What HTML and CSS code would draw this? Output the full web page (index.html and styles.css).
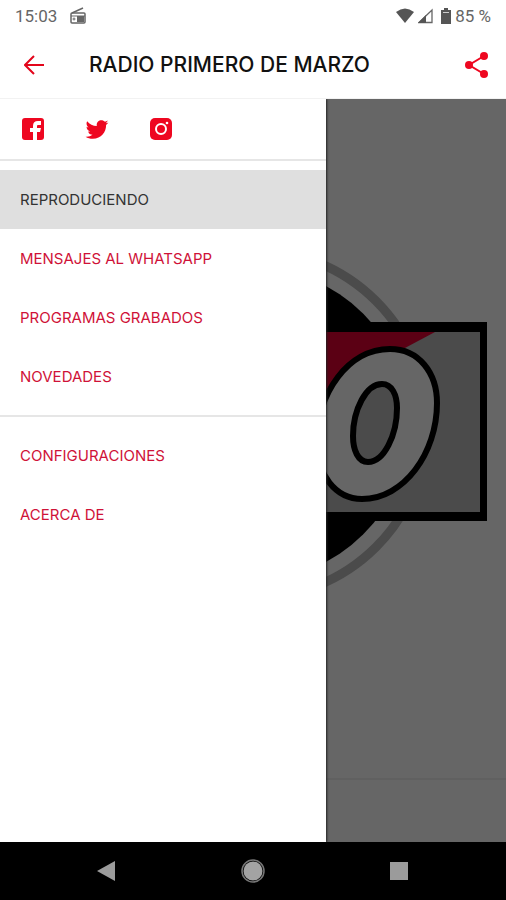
FILE: index.html
```html
<!DOCTYPE html>
<html lang="es">
<head>
<meta charset="utf-8">
<meta name="viewport" content="width=device-width, initial-scale=1">
<title>Radio Primero de Marzo</title>
<link rel="stylesheet" href="styles.css">
</head>
<body>
<div class="status">
  <span>15:03</span>
  <svg class="status-radio" width="18" height="18" viewBox="0 0 18 18" fill="none" stroke="#666" stroke-width="1.500"><path d="M3 6 14 1"/><rect x="2" y="6" width="14" height="10" rx="1"/><path d="M2 9h14" stroke-width="1"/><path d="M8 9h7v6H8z" fill="#666" stroke="none"/><circle cx="5" cy="12" r="1" stroke-width="1"/></svg>
  <div class="status-right">
    <svg width="18" height="16" viewBox="0 0 18 16" fill="#555"><path d="M0 4Q9-3 18 4L9 15z"/></svg>
    <svg width="16" height="16" viewBox="0 0 16 16"><path d="M1 14.500 14 2v12.500z" fill="none" stroke="#666" stroke-width="1.300"/><path d="M0 15 8 7v8z" fill="#555"/></svg>
    <svg class="battery" width="10" height="16" viewBox="0 0 10 16" fill="#555"><path d="M3 0h4v2h3v14H0V2h3z"/><path d="M2 4h6v1H2z" fill="#ccc"/></svg>
    <span>85 %</span>
  </div>
</div>
<header class="appbar">
  <button class="icon-button" aria-label="Volver"><svg width="22" height="22" viewBox="0 0 22 22" fill="none" stroke="#e3051b" stroke-width="2"><path d="M20 11H2M10 2l-9 9 9 9"/></svg></button>
  <h1>RADIO PRIMERO DE MARZO</h1>
  <button class="icon-button" aria-label="Compartir"><svg width="24" height="26" viewBox="0 0 24 26" fill="#ee0720"><path d="M19 4 4 13l15 9" fill="none" stroke="#ee0720" stroke-width="2"/><circle cx="19" cy="4" r="4"/><circle cx="4" cy="13" r="4"/><circle cx="19" cy="22" r="4"/></svg></button>
</header>
<div class="stage">
  <main class="player">
    <div class="cover">
      <svg width="468" height="360" viewBox="19 244 468 360">
        <circle cx="253" cy="424" r="174" fill="none" stroke="#4b4b4b" stroke-width="9"/>
        <circle cx="253" cy="424" r="156"/>
        <path d="M19 322h468v199H19z"/>
        <path d="M26 332h454v180H26z" fill="#4b4b4b"/>
        <path d="M26 332h409L326 390H26z" fill="#5b0014"/>
        <path d="M326 386 365 332 405 348 326 430z" fill="#5b0014"/>
        <path d="M390 349C419 349 437 373 437 403C437 453 404 499 362 499C335 499 317 474 317 443C317 393 348 349 390 349z" fill="#666" stroke="#000" stroke-width="6"/>
        <path d="M382 384C392 384 397 395 397 408C397 435 384 462 368 462C358 462 353 450 353 436C353 410 366 384 382 384z" fill="#4b4b4b" stroke="#000" stroke-width="6"/>
      </svg>
    </div>
    <div class="controls"></div>
  </main>
  <aside class="drawer">
    <div class="social">
      <a href="#" aria-label="Facebook"><svg width="22" height="22" viewBox="0 0 22 22"><rect width="22" height="22" rx="3" fill="#ee0720"/><path d="M11 22v-8H8v-4h3V8q0-5 5-5h3v4h-3q-1 0-1 1v2h4l-1 4h-3v8z" fill="#fff"/></svg></a>
      <a href="#" aria-label="Twitter"><svg width="24" height="24" viewBox="1 1 22 22" fill="#ee0720"><path d="M22.460 6c-.77.350-1.600.580-2.460.690.880-.530 1.560-1.370 1.880-2.380-.830.500-1.750.850-2.720 1.050C18.370 4.500 17.260 4 16 4c-2.350 0-4.270 1.920-4.270 4.290 0 .340.040.670.110.980C8.280 9.090 5.110 7.380 3 4.790c-.370.630-.580 1.370-.580 2.150 0 1.490.750 2.810 1.910 3.560-.710 0-1.370-.200-1.950-.500v.030c0 2.080 1.480 3.820 3.440 4.210a4.220 4.220 0 0 1-1.930.070 4.280 4.280 0 0 0 4 2.980 8.521 8.521 0 0 1-5.330 1.840c-.340 0-.680-.020-1.020-.060C3.440 20.290 5.700 21 8.120 21 16 21 20.330 14.460 20.330 8.790c0-.190 0-.370-.010-.560.840-.600 1.560-1.360 2.140-2.230z"/></svg></a>
      <a href="#" aria-label="Instagram"><svg width="22" height="22" viewBox="0 0 22 22"><rect width="22" height="22" rx="5" fill="#ee0720"/><circle cx="11" cy="11" r="5" fill="none" stroke="#fff" stroke-width="2"/><circle cx="17" cy="5" r="1.300" fill="#fff"/></svg></a>
    </div>
    <nav>
      <ul class="group">
        <li><a class="current" href="#" aria-current="page">REPRODUCIENDO</a></li>
        <li><a href="#">MENSAJES AL WHATSAPP</a></li>
        <li><a href="#">PROGRAMAS GRABADOS</a></li>
        <li><a href="#">NOVEDADES</a></li>
      </ul>
      <ul class="group">
        <li><a href="#">CONFIGURACIONES</a></li>
        <li><a href="#">ACERCA DE</a></li>
      </ul>
    </nav>
  </aside>
</div>
<footer class="system">
  <button aria-label="Atrás"><svg width="24" height="24" viewBox="0 0 24 24" fill="#9b9b9b"><path d="M2 12 20 2v20z"/></svg></button>
  <button aria-label="Inicio"><svg width="24" height="24" viewBox="0 0 24 24"><circle cx="12" cy="12" r="11" fill="none" stroke="#777" stroke-width="1.500"/><circle cx="12" cy="12" r="9.500" fill="#a3a3a3"/></svg></button>
  <button aria-label="Recientes"><svg width="24" height="24" viewBox="0 0 24 24"><rect x="3" y="3" width="18" height="18" fill="#9b9b9b"/></svg></button>
</footer>
</body>
</html>
```
FILE: styles.css
```css
* {
  box-sizing: border-box;
}

body {
  margin: 0;
  min-height: 100vh;
  display: flex;
  flex-direction: column;
  background: #fff;
  font-family: Inter, "Liberation Sans", sans-serif;
}

svg {
  display: block;
}

button {
  display: block;
  padding: 0;
  border: 0;
  background: none;
}

.status {
  display: flex;
  align-items: center;
  height: 31px;
  padding: 0 15px;
  color: #666;
  font-family: Roboto, sans-serif;
  font-size: 17px;
}

.status-radio {
  margin-left: 12px;
}

.status-right {
  display: flex;
  align-items: center;
  gap: 4px;
  margin-left: auto;
}

.battery {
  margin-left: 3px;
}

.appbar {
  display: flex;
  align-items: center;
  height: 68px;
  padding: 0 17px 0 24px;
  border-bottom: 1px solid #f2f2f2;
}

.appbar h1 {
  flex: 1;
  margin: 0 0 0 43px;
  color: #111;
  font-size: 21px;
  font-weight: 500;
}

.stage {
  position: relative;
  flex: 1;
  display: flex;
  background: #666;
}

.player {
  flex: 1;
  display: flex;
  flex-direction: column;
  overflow: hidden;
}

.cover {
  flex: 1;
  display: flex;
  align-items: center;
  justify-content: center;
  padding-bottom: 30px;
}

.cover svg {
  flex: none;
}

.controls {
  height: 64px;
  border-top: 2px solid #606060;
}

.drawer {
  position: absolute;
  top: 0;
  bottom: 0;
  left: 0;
  width: 326px;
  background: #fff;
  box-shadow: 1px 0 2px #222;
  clip-path: inset(0 -8px 0 0);
}

.social {
  display: flex;
  align-items: center;
  gap: 41px;
  height: 62px;
  padding: 0 22px;
  border-bottom: 2px solid #e6e6e6;
}

.group {
  margin: 0;
  padding: 9px 0;
  list-style: none;
}

.group + .group {
  border-top: 2px solid #e6e6e6;
}

.group a {
  display: flex;
  align-items: center;
  height: 59px;
  padding: 0 20px;
  color: #cf1238;
  font-size: 15px;
  text-decoration: none;
}

.group .current {
  background: #dfdfdf;
  color: #333;
}

.system {
  display: flex;
  justify-content: space-between;
  align-items: center;
  height: 58px;
  padding: 0 95px;
  background: #000;
}
```
